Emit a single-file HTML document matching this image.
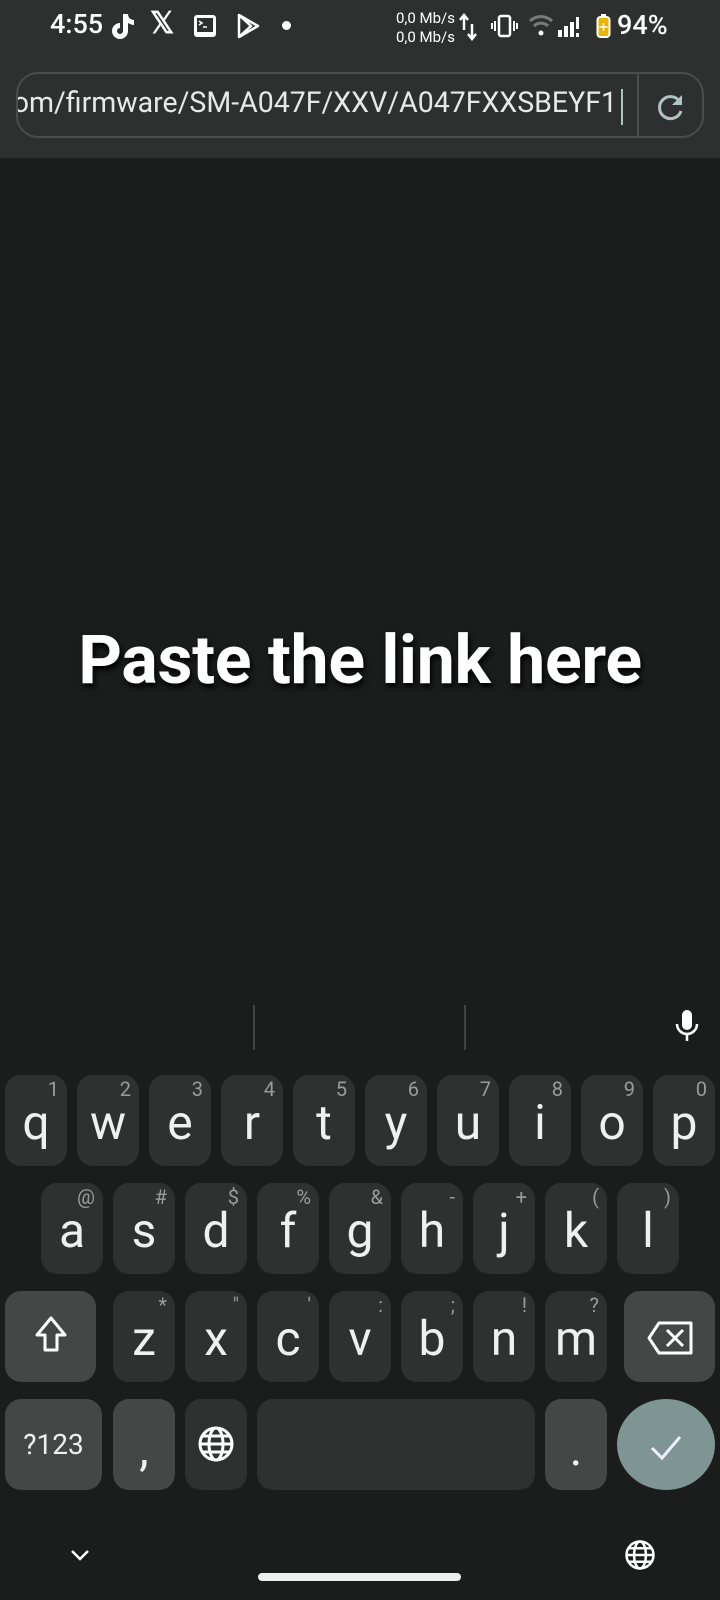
<!DOCTYPE html>
<html><head><meta charset="utf-8"><style>
*{margin:0;padding:0;box-sizing:border-box}
body{width:720px;height:1600px;background:#1b1d1c;font-family:"Roboto","Liberation Sans",sans-serif;color:#fff;position:relative;overflow:hidden}
.hdr{position:absolute;left:0;top:0;width:720px;height:158px;background:#2e302f}
.abs{position:absolute}
.url{position:absolute;left:16px;top:72px;width:688px;height:66px;border:2px solid #4a4d4c;border-radius:22px;overflow:hidden}
.url .t{position:absolute;right:85px;top:12px;font-size:28.5px;white-space:nowrap;color:#e8e8e8}
.url .cur{position:absolute;left:603px;top:15px;width:2px;height:36px;background:#a9c7c4}
.url .div{position:absolute;left:619px;top:0;width:2px;height:66px;background:#4a4d4c}
.title{position:absolute;left:0;width:720px;top:620px;text-align:center;font-weight:bold;font-size:68px;text-shadow:2px 4px 6px #000;letter-spacing:-0.3px}
.k{position:absolute;height:91px;background:#2f3130;border-radius:16px;text-align:center;font-size:48px;line-height:96px;color:#f0f0f0}
.k.s{background:#444746}
.k sup{position:absolute;right:8px;top:4px;font-size:20px;line-height:20px;color:#9a9c9b}
</style></head><body>
<div class="hdr"></div>
<div class="abs" style="left:50px;top:8px;font-size:27px;font-weight:500">4:55</div>
<svg class="abs" style="left:110px;top:12px" width="26" height="28" viewBox="0 0 26 28"><path d="M13 2h5c0 4 3 6 6 6v5c-2 0-4-1-6-2v8a8 8 0 1 1-8-8v5a3 3 0 1 0 3 3z" fill="#fff"/></svg>
<div class="abs" style="left:150px;top:6px;font-size:30px;font-weight:bold">𝕏</div>
<svg class="abs" style="left:192px;top:13px" width="26" height="26" viewBox="0 0 26 26"><rect x="2" y="2" width="22" height="22" rx="3" fill="#fff"/><rect x="5" y="5" width="16" height="14" fill="#2e302f"/><path d="M7 8l3 2-3 2M11 14h4" stroke="#fff" stroke-width="1.5" fill="none"/></svg>
<svg class="abs" style="left:235px;top:12px" width="26" height="28" viewBox="0 0 26 28"><path d="M4 3l19 11-19 11zM4 3l12 11L4 25" stroke="#fff" stroke-width="2.5" fill="none" stroke-linejoin="round"/></svg>
<div class="abs" style="left:282px;top:21px;width:9px;height:9px;border-radius:50%;background:#fff"></div>
<div class="abs" style="left:396px;top:9px;font-size:15px;line-height:19px;color:#fff">0,0 Mb/s<br>0,0 Mb/s</div>
<svg class="abs" style="left:459px;top:12px" width="18" height="30" viewBox="0 0 18 30"><path d="M5 18V4M1 8l4-5 4 5M13 12v14M9 22l4 5 4-5" stroke="#fff" stroke-width="2.5" fill="none"/></svg>
<svg class="abs" style="left:491px;top:14px" width="27" height="24" viewBox="0 0 27 24"><rect x="8" y="2" width="11" height="20" rx="2" stroke="#fff" stroke-width="2.5" fill="none"/><path d="M4 7v10M1 9v6M23 7v10M26 9v6" stroke="#fff" stroke-width="2"/></svg>
<svg class="abs" style="left:528px;top:14px" width="26" height="22" viewBox="0 0 26 22"><path d="M2 7a16 16 0 0 1 22 0M6 12a10 10 0 0 1 14 0" stroke="#7a7c7b" stroke-width="3" fill="none"/><circle cx="13" cy="19" r="2.5" fill="#fff"/></svg>
<svg class="abs" style="left:557px;top:14px" width="24" height="24" viewBox="0 0 24 24"><rect x="1" y="16" width="4" height="7" fill="#fff"/><rect x="7" y="12" width="4" height="11" fill="#fff"/><rect x="13" y="8" width="4" height="15" fill="#fff"/><rect x="19" y="3" width="3" height="12" fill="#fff"/><rect x="19" y="19" width="3" height="4" fill="#fff"/></svg>
<svg class="abs" style="left:596px;top:14px" width="15" height="24" viewBox="0 0 15 24"><rect x="1.5" y="3" width="12" height="20" rx="3" stroke="#fff" stroke-width="2" fill="#e8b400"/><rect x="5" y="0" width="5" height="3" fill="#fff"/><path d="M7.5 9v8M3.5 13h8" stroke="#fff" stroke-width="1.6"/></svg>
<div class="abs" style="left:617px;top:9px;font-size:27px;font-weight:500">94%</div>
<div class="url"><div class="t">com/firmware/SM-A047F/XXV/A047FXXSBEYF1</div><div class="cur"></div><div class="div"></div>
<svg class="abs" style="left:638px;top:18px" width="30" height="30" viewBox="0 0 30 30"><path d="M24 10A11 11 0 1 0 25 19" stroke="#b0c4c2" stroke-width="3" fill="none"/><path d="M26 3v10H16z" fill="#b0c4c2"/></svg></div>
<div class="title">Paste the link here</div>
<div class="abs" style="left:253px;top:1005px;width:2px;height:45px;background:#444"></div>
<div class="abs" style="left:464px;top:1005px;width:2px;height:45px;background:#444"></div>
<svg class="abs" style="left:674px;top:1008px" width="26" height="36" viewBox="0 0 26 36"><rect x="8" y="2" width="10" height="20" rx="5" fill="#fff"/><path d="M3 16a10 10 0 0 0 20 0M13 26v7" stroke="#fff" stroke-width="2.5" fill="none"/></svg>

<div class="k" style="left:5px;top:1075px;width:62px">q<sup>1</sup></div>
<div class="k" style="left:77px;top:1075px;width:62px">w<sup>2</sup></div>
<div class="k" style="left:149px;top:1075px;width:62px">e<sup>3</sup></div>
<div class="k" style="left:221px;top:1075px;width:62px">r<sup>4</sup></div>
<div class="k" style="left:293px;top:1075px;width:62px">t<sup>5</sup></div>
<div class="k" style="left:365px;top:1075px;width:62px">y<sup>6</sup></div>
<div class="k" style="left:437px;top:1075px;width:62px">u<sup>7</sup></div>
<div class="k" style="left:509px;top:1075px;width:62px">i<sup>8</sup></div>
<div class="k" style="left:581px;top:1075px;width:62px">o<sup>9</sup></div>
<div class="k" style="left:653px;top:1075px;width:62px">p<sup>0</sup></div>

<div class="k" style="left:41px;top:1183px;width:62px">a<sup>@</sup></div>
<div class="k" style="left:113px;top:1183px;width:62px">s<sup>#</sup></div>
<div class="k" style="left:185px;top:1183px;width:62px">d<sup>$</sup></div>
<div class="k" style="left:257px;top:1183px;width:62px">f<sup>%</sup></div>
<div class="k" style="left:329px;top:1183px;width:62px">g<sup>&amp;</sup></div>
<div class="k" style="left:401px;top:1183px;width:62px">h<sup>-</sup></div>
<div class="k" style="left:473px;top:1183px;width:62px">j<sup>+</sup></div>
<div class="k" style="left:545px;top:1183px;width:62px">k<sup>(</sup></div>
<div class="k" style="left:617px;top:1183px;width:62px">l<sup>)</sup></div>

<div class="k s" style="left:5px;top:1291px;width:91px"><svg style="margin-top:24px" width="34" height="40" viewBox="0 0 34 40"><path d="M17 3L3 20h8v15h12V20h8z" stroke="#fff" stroke-width="3" fill="none" stroke-linejoin="round"/></svg></div>
<div class="k" style="left:113px;top:1291px;width:62px">z<sup>*</sup></div>
<div class="k" style="left:185px;top:1291px;width:62px">x<sup>"</sup></div>
<div class="k" style="left:257px;top:1291px;width:62px">c<sup>'</sup></div>
<div class="k" style="left:329px;top:1291px;width:62px">v<sup>:</sup></div>
<div class="k" style="left:401px;top:1291px;width:62px">b<sup>;</sup></div>
<div class="k" style="left:473px;top:1291px;width:62px">n<sup>!</sup></div>
<div class="k" style="left:545px;top:1291px;width:62px">m<sup>?</sup></div>
<div class="k s" style="left:624px;top:1291px;width:91px"><svg style="margin-top:28px" width="46" height="34" viewBox="0 0 46 34"><path d="M12 2h32v30H12L2 17z" stroke="#fff" stroke-width="3" fill="none" stroke-linejoin="round"/><path d="M20 9l16 16M36 9L20 25" stroke="#fff" stroke-width="3"/></svg></div>

<div class="k s" style="left:5px;top:1399px;width:97px;font-size:28px;line-height:91px">?123</div>
<div class="k s" style="left:113px;top:1399px;width:62px;line-height:100px">,</div>
<div class="k" style="left:185px;top:1399px;width:62px"><svg style="margin-top:26px" width="38" height="38" viewBox="0 0 38 38" fill="none" stroke="#fff" stroke-width="3"><circle cx="19" cy="19" r="16"/><ellipse cx="19" cy="19" rx="7" ry="16"/><path d="M3 19h32M6 11h26M6 27h26"/></svg></div>
<div class="k" style="left:257px;top:1399px;width:278px"></div>
<div class="k s" style="left:545px;top:1399px;width:62px;line-height:100px">.</div>
<div class="k" style="left:617px;top:1399px;width:98px;border-radius:50%;background:#7f9594"><svg style="margin-top:30px" width="34" height="30" viewBox="0 0 34 30"><path d="M3 15l10 10L31 4" stroke="#eef" stroke-width="3" fill="none"/></svg></div>

<svg class="abs" style="left:70px;top:1548px" width="20" height="14" viewBox="0 0 20 14"><path d="M2 3l8 8 8-8" stroke="#fff" stroke-width="2.5" fill="none"/></svg>
<svg class="abs" style="left:624px;top:1539px" width="32" height="32" viewBox="0 0 38 38" fill="none" stroke="#fff" stroke-width="3"><circle cx="19" cy="19" r="16"/><ellipse cx="19" cy="19" rx="7" ry="16"/><path d="M3 19h32M6 11h26M6 27h26"/></svg>
<div class="abs" style="left:258px;top:1573px;width:203px;height:8px;border-radius:4px;background:#eee"></div>
</body></html>
